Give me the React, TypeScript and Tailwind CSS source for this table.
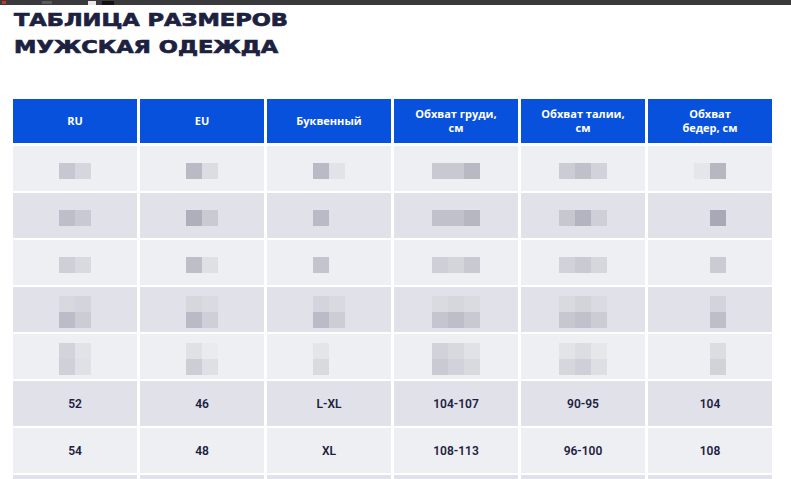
import React from "react";

const headers: string[][] = [
  ["RU"],
  ["EU"],
  ["Буквенный"],
  ["Обхват груди,", "см"],
  ["Обхват талии,", "см"],
  ["Обхват", "бедер, см"],
];

type Mosaic = string[][];
const blurred: Mosaic[][] = [
  [
    [["#c6c7d0", "#d6d7de"]],
    [["#b9bac5", "#dcdde3"]],
    [["#b9bac5", "#e2e3e8"]],
    [["#c8c9d1", "#c8c9d1", "#b8b9c3"]],
    [["#cbccd4", "#bfc0ca", "#d2d3da"]],
    [["#e5e6ea", "#b6b7c1"]],
  ],
  [
    [["#bdbec9", "#c8c9d2"]],
    [["#aeafbb", "#c9cad2"]],
    [["#b9bac5", ""]],
    [["#c0c1ca", "#c0c1ca", "#b6b7c1"]],
    [["#c6c7cf", "#b3b4bf", "#cfd0d7"]],
    [["", "#a8a9b6"]],
  ],
  [
    [["#cfd0d7", "#d9dae0"]],
    [["#bdbec8", "#dfe0e5"]],
    [["#c3c4cd", ""]],
    [["#cfd0d7", "#d4d5db", "#c8c9d1"]],
    [["#d2d3da", "#c9cad2", "#d6d7dd"]],
    [["", "#cbccd3"]],
  ],
  [
    [
      ["#d8d9df", "#d4d5dc"],
      ["#bbbcc7", "#cbccd4"],
    ],
    [
      ["#d6d7dd", "#dadbe1"],
      ["#b9bac5", "#cfd0d7"],
    ],
    [
      ["#d4d5dc", "#d9dae0"],
      ["#babbc6", "#cdced5"],
    ],
    [
      ["#dadbe1", "#d6d7dd", "#dadbe1"],
      ["#c4c5ce", "#bdbec8", "#c8c9d1"],
    ],
    [
      ["#d9dae0", "#d3d4da", "#dadbe1"],
      ["#c6c7cf", "#c0c1ca", "#cbccd4"],
    ],
    [
      ["", "#d3d4db"],
      ["", "#bdbec8"],
    ],
  ],
  [
    [
      ["#d3d4db", "#e2e3e8"],
      ["#d0d1d8", "#e0e1e6"],
    ],
    [
      ["#e0e1e6", "#eaebef"],
      ["#cdced5", "#dfe0e5"],
    ],
    [
      ["#e4e5e9", ""],
      ["#d9dae0", ""],
    ],
    [
      ["#d2d3da", "#d8d9df", "#e1e2e7"],
      ["#c9cad2", "#d2d3da", "#d9dae0"],
    ],
    [
      ["#e3e4e8", "#dcdde2", "#e6e7eb"],
      ["#d6d7dd", "#cfd0d7", "#dedfe4"],
    ],
    [
      ["", "#dcdde2"],
      ["", "#d2d3d9"],
    ],
  ],
];

const dataRows: string[][] = [
  ["52", "46", "L-XL", "104-107", "90-95", "104"],
  ["54", "48", "XL", "108-113", "96-100", "108"],
  ["", "", "", "", "", ""],
];

function rowBg(i: number) {
  return i % 2 === 0 ? "bg-[#eeeff3]" : "bg-[#e1e2e9]";
}

export default function App() {
  return (
    <div className="w-[791px] h-[479px] overflow-hidden bg-white">
      <div className="h-[5px] bg-[#3a3a3c] flex items-center gap-[6px] pl-[2px]">
        <div className="w-[4px] h-[3px] bg-[#c0392b]" />
        <div className="w-[10px] h-[3px] bg-[#5a5a5e] ml-[30px]" />
        <div className="w-[8px] h-[4px] bg-[#e8e8e8] ml-[30px]" />
        <div className="w-[12px] h-[4px] bg-[#111111]" />
      </div>
      <div className="pl-[14px]">
        <div
          className="pt-[1px] text-[#1d2140] font-bold text-[18px] leading-[27px] origin-left scale-x-[1.25] [-webkit-text-stroke:0.7px_#1d2140]"
          style={{ fontFamily: '"DejaVu Sans", sans-serif' }}
        >
          <div>ТАБЛИЦА РАЗМЕРОВ</div>
          <div>МУЖСКАЯ ОДЕЖДА</div>
        </div>
      </div>
      <div
        className="mt-[39px] ml-[13px] w-[759px] flex flex-col gap-[2px]"
        style={{ fontFamily: '"Open Sans", sans-serif' }}
      >
        <div className="grid grid-cols-6 gap-[3px] mb-[1px]">
          {headers.map((h, i) => (
            <div
              key={i}
              className="h-[44px] bg-[#0751dc] flex flex-col items-center justify-center text-white font-bold text-[11px] leading-[14px] text-center"
            >
              {h.map((l, j) => (
                <div key={j}>{l}</div>
              ))}
            </div>
          ))}
        </div>
        {blurred.map((row, ri) => (
          <div key={ri} className="grid grid-cols-6 gap-[3px]">
            {row.map((cell, ci) => (
              <div
                key={ci}
                className={`h-[45px] ${rowBg(ri)} flex flex-col items-center justify-center pt-[5px]`}
              >
                {cell.map((br, bi) => (
                  <div key={bi} className="flex">
                    {br.map((c, k) => (
                      <div
                        key={k}
                        className="w-[16px] h-[16px]"
                        style={{ backgroundColor: c || "transparent" }}
                      />
                    ))}
                  </div>
                ))}
              </div>
            ))}
          </div>
        ))}
        {dataRows.map((row, ri) => (
          <div key={ri} className="grid grid-cols-6 gap-[3px]">
            {row.map((v, ci) => (
              <div
                key={ci}
                className={`h-[45px] ${rowBg(ri + 5)} flex items-center justify-center text-[#1d2140] text-[12px] font-semibold`}
                style={{ fontFamily: "Roboto, sans-serif" }}
              >
                {v}
              </div>
            ))}
          </div>
        ))}
      </div>
    </div>
  );
}
